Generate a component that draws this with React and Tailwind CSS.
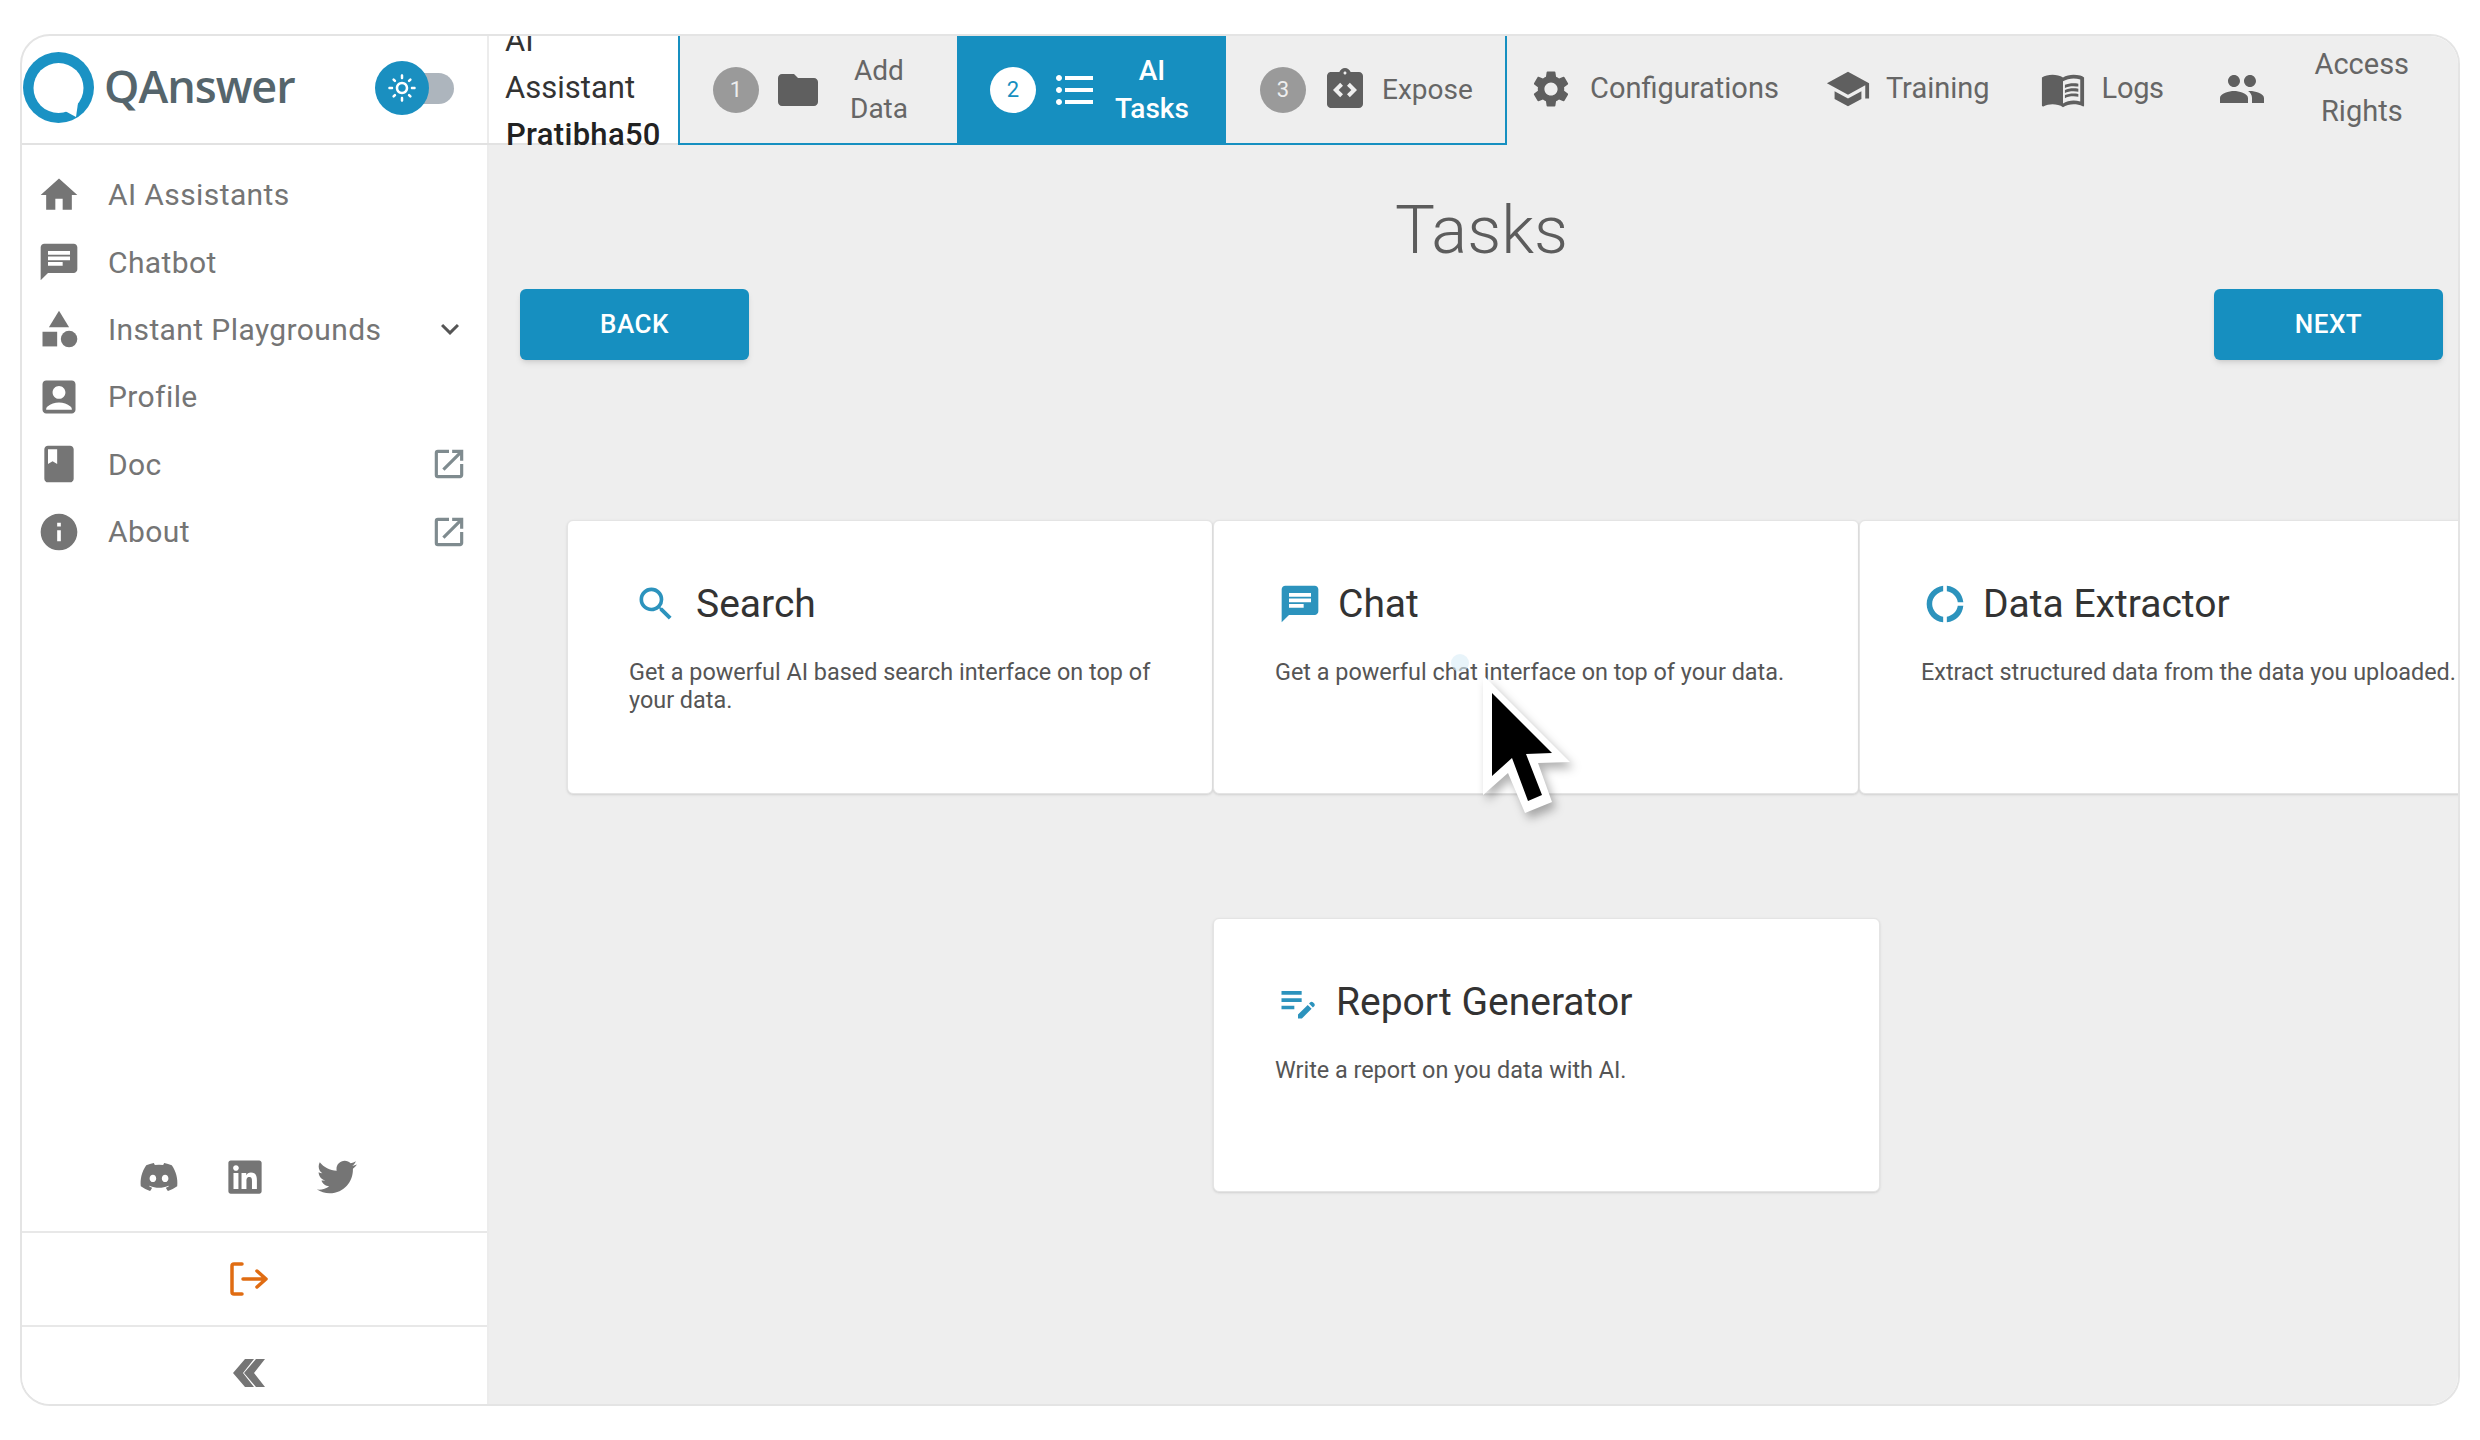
import {
  MdHome, MdChat, MdCategory, MdAccountBox, MdBook, MdInfo, MdOpenInNew, MdExpandMore,
  MdFolder, MdFormatListBulleted, MdIntegrationInstructions, MdSettings, MdSchool,
  MdMenuBook, MdPeople, MdSearch, MdDonutLarge, MdEditNote, MdOutlineLightMode,
} from 'react-icons/md';
import { FaDiscord, FaLinkedin, FaTwitter } from 'react-icons/fa';

const navItems = [
  { icon: MdHome, label: 'AI Assistants' },
  { icon: MdChat, label: 'Chatbot' },
  { icon: MdCategory, label: 'Instant Playgrounds', right: MdExpandMore },
  { icon: MdAccountBox, label: 'Profile' },
  { icon: MdBook, label: 'Doc', right: MdOpenInNew },
  { icon: MdInfo, label: 'About', right: MdOpenInNew },
];

function Logo() {
  return (
    <svg width="71" height="71" viewBox="0 0 71 71" className="shrink-0">
      <circle cx="35.500" cy="35.500" r="35.500" fill="#1a92c4" />
      <circle cx="35.500" cy="36" r="25" fill="#ffffff" />
      <path d="M42 59L53 65L55 51Z" fill="#ffffff" />
    </svg>
  );
}

function Step({ n, icon: Icon, active, textClass, padClass, children }) {
  return (
    <div className={`flex h-full items-center ${padClass} ${active ? 'bg-[#168fc0] text-white font-medium' : 'text-[#666666]'}`}>
      <div className={`flex h-[46px] w-[46px] shrink-0 items-center justify-center rounded-full text-[22px] ${active ? 'bg-white text-[#168fc0] font-normal' : 'bg-[#9a9a9a] text-[#eeeeee]'}`}>
        {n}
      </div>
      <Icon className={`ml-[15px] shrink-0 ${active ? 'text-white' : 'text-[#5f5f5f]'}`} size={48} />
      <div className={`text-center text-[28px] leading-[38px] ${textClass}`}>{children}</div>
    </div>
  );
}

function TaskCard({ icon: Icon, title, text, iconClass, className }) {
  return (
    <div className={`h-[274px] shrink-0 rounded-[6px] border border-[#e4e4e4] bg-white pl-[61px] shadow-sm ${className}`}>
      <div className="mt-[61px] flex h-[44px] items-center">
        <Icon className={`shrink-0 text-[#2c93bd] ${iconClass}`} size={44} />
        <span className="text-[39px] leading-[44px] text-[#333333]">{title}</span>
      </div>
      <p className="mt-[32px] whitespace-pre-line text-[23.4px] leading-[28px] text-[#555555]">{text}</p>
    </div>
  );
}

function Cursor() {
  return (
    <svg width="120" height="170" viewBox="0 0 120 170" className="absolute left-[1470px] top-[665px] drop-shadow-[4px_6px_5px_rgba(0,0,0,0.3)]">
      <path d="M13 10V130L38 108L55 148L82 137L68 98L100 97Z" fill="#ffffff" />
      <path d="M22 28V111L42 93L58 136L72 130L56 89L82 88Z" fill="#000000" />
    </svg>
  );
}

export default function App() {
  return (
    <div className="relative h-[1440px] w-[2480px] overflow-hidden bg-white pl-[20px] pt-[34px] font-['Roboto',sans-serif]">
      <div className="flex h-[1372px] w-[2440px] flex-col overflow-hidden rounded-[30px] border-2 border-[#e4e4e4] bg-white">
        {/* Top bar */}
        <div className="flex h-[109px] shrink-0 border-b-2 border-[#e2e2e2]">
          <div className="flex w-[467px] shrink-0 items-center border-r-2 border-[#ececec] pb-[5px] pl-[1px]">
            <Logo />
            <span className="-mt-[2px] ml-[10px] font-['Open_Sans',sans-serif] text-[45px] font-semibold tracking-[-1px] text-[#55656c]">QAnswer</span>
            <div className="relative ml-[107px] mt-[3px] h-[31px] w-[52px] rounded-full bg-[#adb5bd]">
              <div className="absolute -left-[27px] -top-[12px] flex h-[54px] w-[54px] items-center justify-center rounded-full bg-[#1a8fc0]">
                <MdOutlineLightMode className="text-white" size={30} />
              </div>
            </div>
          </div>
          <div className="-mb-[2px] flex w-[189px] shrink-0 items-center overflow-hidden pb-[6px] pl-[16px] text-[31px] leading-[47px] text-[#333333]">
            <div>
              <div>AI</div>
              <div>Assistant</div>
              <div className="ml-[1px] font-medium tracking-[0.3px] text-[#222222]">Pratibha50</div>
            </div>
          </div>
          <div className="-mb-[2px] flex flex-1 bg-[#eeeeee]">
            <div className="flex w-[829px] shrink-0 border-x-2 border-b-2 border-x-[#168fc0] border-b-[#168fc0]">
              <div className="w-[277px]"><Step n={1} icon={MdFolder} padClass="pl-[33px]" textClass="ml-[1px] w-[112px]">Add<br />Data</Step></div>
              <div className="w-[269px]"><Step n={2} icon={MdFormatListBulleted} active padClass="pl-[33px]" textClass="-ml-[2px] w-[110px]">AI<br />Tasks</Step></div>
              <div className="w-[279px]"><Step n={3} icon={MdIntegrationInstructions} padClass="pl-[34px]" textClass="ml-[13px]">Expose</Step></div>
            </div>
            <div className="flex flex-1 items-center pb-[3px] pl-[22px] text-[29px] text-[#666666]">
              <MdSettings size={44} className="shrink-0 text-[#5f5f5f]" />
              <span className="ml-[17px]">Configurations</span>
              <MdSchool size={46} className="ml-[46px] shrink-0 text-[#5f5f5f]" />
              <span className="ml-[15px]">Training</span>
              <MdMenuBook size={46} className="ml-[50px] shrink-0 text-[#5f5f5f]" />
              <span className="ml-[16px] tracking-[-0.3px]">Logs</span>
              <MdPeople size={48} className="ml-[54px] shrink-0 text-[#5f5f5f]" />
              <div className="-mt-[3px] ml-[36px] w-[120px] text-center leading-[47px]">Access<br />Rights</div>
            </div>
          </div>
        </div>

        <div className="flex min-h-0 flex-1">
          {/* Sidebar */}
          <aside className="flex w-[467px] shrink-0 flex-col border-r-2 border-[#ececec] bg-white pt-[16px]">
            <nav>
              {navItems.map(({ icon: Icon, label, right: Right }) => (
                <div key={label} className="flex h-[67.4px] items-center pl-[15px] pr-[19px] text-[#757575]">
                  <Icon size={44} className="shrink-0" />
                  <span className="ml-[27px] flex-1 text-[30px] tracking-[0.4px]">{label}</span>
                  {Right && <Right size={Right === MdExpandMore ? 36 : 38} className={Right === MdExpandMore ? 'text-[#555555]' : 'text-[#7f8b8f]'} />}
                </div>
              ))}
            </nav>
            <div className="mt-auto flex items-center pb-[34px] pl-[117px] text-[#757575]">
              <FaDiscord size={40} />
              <FaLinkedin size={38} className="ml-[47px]" />
              <FaTwitter size={40} className="ml-[53px]" />
            </div>
            <div className="flex h-[94px] items-center justify-center border-t-2 border-[#e8e8e8] pr-[12px]">
              <svg width="38" height="34" viewBox="0 0 38 34" fill="none" stroke="#e06c12" strokeWidth="3.500" strokeLinecap="round" strokeLinejoin="round">
                <path d="M12 2H4a2 2 0 0 0-2 2v26a2 2 0 0 0 2 2h8" />
                <path d="M13 17H36M27 9l9 8-9 8" />
              </svg>
            </div>
            <div className="flex h-[79px] items-center justify-center border-t-2 border-[#e8e8e8] pr-[12px] pt-[14px]">
              <svg width="32" height="28" viewBox="0 0 32 28" fill="#757575">
                <path d="M0 14L12 0H21L10 14L21 28H12Z" />
                <path d="M11 14L23 0H32L21 14L32 28H23Z" />
              </svg>
            </div>
          </aside>

          {/* Main */}
          <main className="min-w-0 flex-1 overflow-hidden bg-[#eeeeee] pt-[49px]">
            <div className="pl-[31px] pr-[15px]">
              <h1 className="text-center text-[67px] font-[350] leading-[72px] text-[#5c5c5c]">Tasks</h1>
              <div className="mt-[23px] flex justify-between">
                <button className="h-[71px] w-[229px] rounded-[6px] bg-[#168fc0] text-[26px] font-medium tracking-[0.5px] text-white shadow-md">BACK</button>
                <button className="h-[71px] w-[229px] rounded-[6px] bg-[#168fc0] text-[26px] font-medium tracking-[0.5px] text-white shadow-md">NEXT</button>
              </div>
            </div>
            <div className="mt-[160px] flex pl-[78px]">
              <TaskCard className="w-[646px]" icon={MdSearch} iconClass="ml-[5px] mr-[18px]" title="Search" text={'Get a powerful AI based search interface on top of\nyour data.'} />
              <TaskCard className="w-[646px]" icon={MdChat} iconClass="ml-[3px] mr-[16px]" title="Chat" text="Get a powerful chat interface on top of your data." />
              <TaskCard className="w-[646px]" icon={MdDonutLarge} iconClass="ml-[2px] mr-[16px]" title="Data Extractor" text="Extract structured data from the data you uploaded." />
            </div>
            <div className="mt-[124px] flex pl-[724px]">
              <TaskCard className="w-[667px]" icon={MdEditNote} iconClass="ml-[1px] mr-[16px]" title="Report Generator" text="Write a report on you data with AI." />
            </div>
          </main>
        </div>
      </div>
      <div className="absolute left-[1451px] top-[654px] h-[18px] w-[18px] rounded-full bg-[#d8ecf6]/60" />
      <Cursor />
    </div>
  );
}
